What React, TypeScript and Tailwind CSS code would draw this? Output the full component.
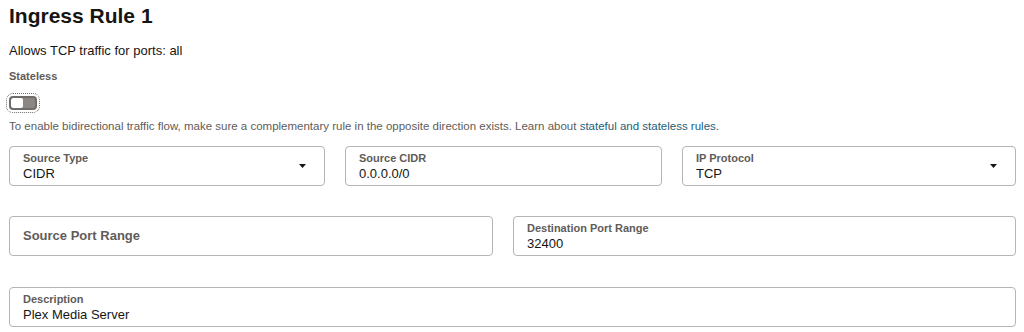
import { useState } from 'react';

function Field({ label, value, select }: { label: string; value?: string; select?: boolean }) {
    return (
        <div className="relative h-[40px] rounded-[4px] border border-[#b7b4b1] bg-white px-[13px]">
            {value !== undefined ? (
                <div className="pt-[4px]">
                    <div className="text-[11px] leading-[14px] font-bold text-[#5f5c59]">{label}</div>
                    <div className="text-[13px] leading-[17px] text-[#161513]">{value}</div>
                </div>
            ) : (
                <div className="flex h-full items-center text-[13px] font-bold text-[#5f5c59]">{label}</div>
            )}
            {select && (
                <svg className="absolute right-[18px] top-[17px]" width="7" height="4" viewBox="0 0 7 4">
                    <path d="M0 0 H7 L3.5 4 Z" fill="#161513" />
                </svg>
            )}
        </div>
    );
}

export default function App() {
    const [stateless, setStateless] = useState(false);

    return (
        <div className="h-[332px] w-[1024px] overflow-hidden bg-white px-[9px] pr-[8px] font-['Liberation_Sans',Arial,sans-serif] text-[#161513]">
            <h1 className="pt-[2px] text-[21px] leading-[28px] font-bold">Ingress Rule 1</h1>
            <p className="mt-[13px] text-[13px] leading-[16px]">Allows TCP traffic for ports: all</p>
            <div className="mt-[10px] text-[11px] leading-[14px] font-bold text-[#5f5c59]">Stateless</div>
            <button
                onClick={() => setStateless(!stateless)}
                className="mt-[10px] -ml-[3px] flex rounded-[7px] border border-dotted border-[#6f6c69] p-[2px]"
            >
                <span className="flex h-[14px] w-[28px] overflow-hidden rounded-[4px] border-2 border-[#6f6c69] bg-[#8c8782]">
                    <span className={`h-full w-[12px] rounded-[2px] bg-white ${stateless ? 'ml-auto' : ''}`} />
                </span>
            </button>
            <p className="mt-[6px] text-[11.5px] leading-[14px] text-[#5f5c59]">
                To enable bidirectional traffic flow, make sure a complementary rule in the opposite direction exists. Learn about{' '}
                <a href="#" className="text-[#22607a]">stateful and stateless rules.</a>
            </p>
            <div className="mt-[13px] grid grid-cols-[316px_317px_1fr] gap-x-[20px]">
                <Field label="Source Type" value="CIDR" select />
                <Field label="Source CIDR" value="0.0.0.0/0" />
                <Field label="IP Protocol" value="TCP" select />
            </div>
            <div className="mt-[30px] grid grid-cols-[484px_1fr] gap-x-[20px]">
                <Field label="Source Port Range" />
                <Field label="Destination Port Range" value="32400" />
            </div>
            <div className="mt-[31px]">
                <Field label="Description" value="Plex Media Server" />
            </div>
        </div>
    );
}
